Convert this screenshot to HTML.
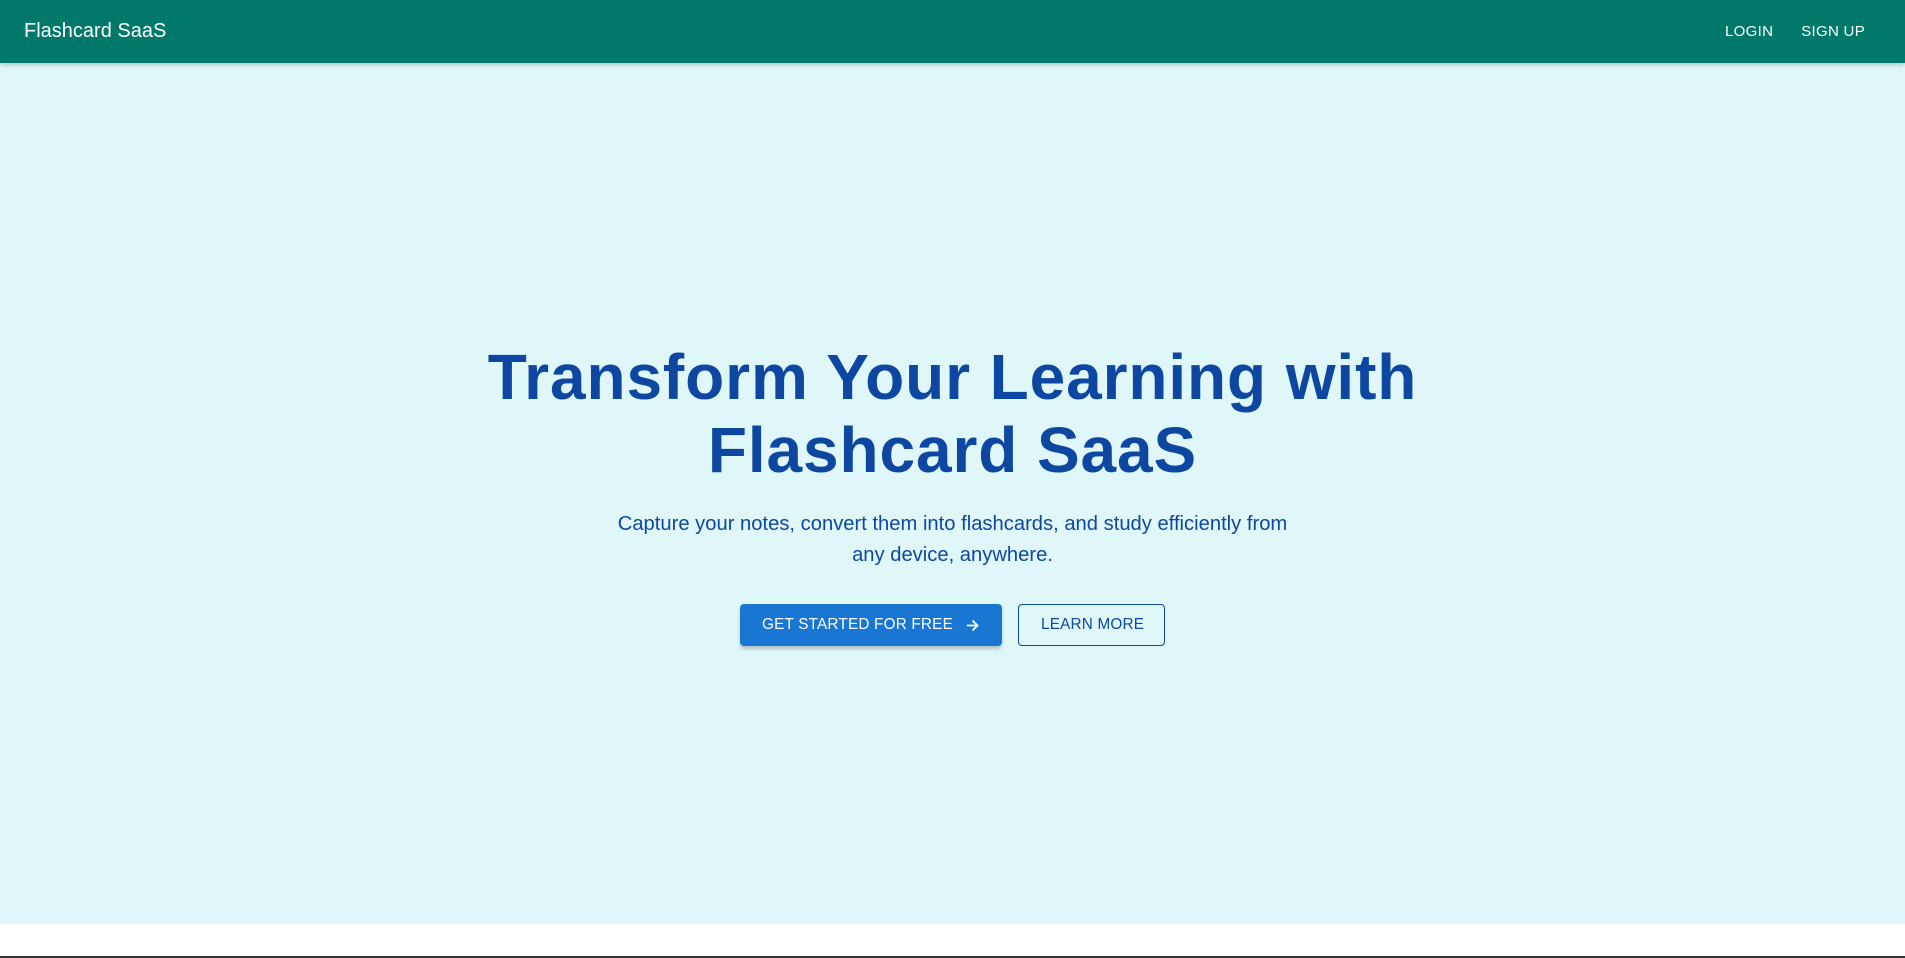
<!DOCTYPE html>
<html><head><meta charset="utf-8"><style>
*{box-sizing:border-box;margin:0;padding:0}
body{width:1905px;height:958px;overflow:hidden;background:#fff;font-family:"Liberation Sans",Arial,sans-serif}
.bar{height:63px;background:#00796b;color:#fff;display:flex;align-items:center;padding:0 24px;box-shadow:0 2px 4px rgba(0,0,0,.2);position:relative;z-index:1}
.bar .t{font-size:20px;flex:1}
.bar .n{font-size:15px;letter-spacing:.3px;margin-left:28px}
.bar .n:last-child{margin-right:16px}
.hero{position:absolute;top:63px;left:0;width:1905px;height:861px;background:#e0f7fa;display:flex;flex-direction:column;align-items:center;justify-content:center;text-align:center;color:#0d47a1;padding-top:4px}
h1{font-size:64px;font-weight:bold;letter-spacing:0.9px;line-height:73px;margin-top:-4px}
p{font-size:20.2px;line-height:31px;width:700px;margin-top:22px;color:#0d47a1}
.btns{display:flex;gap:16px;margin-top:33px}
.b{height:42px;display:flex;align-items:center;white-space:nowrap;font-size:15.3px;border-radius:4px;padding:0 0 0 22px;letter-spacing:.2px}
.p{background:#1976d2;color:#fff;box-shadow:0 3px 3px rgba(0,0,0,.2);width:262px}
.o{border:1.3px solid #0d47a1;color:#0d47a1;width:147px}
.foot{position:absolute;bottom:0;left:0;width:1905px;height:2px;background:#333}
</style></head><body>
<div class="bar"><div class="t">Flashcard SaaS</div><div class="n">LOGIN</div><div class="n">SIGN UP</div></div>
<div class="hero">
<h1>Transform Your Learning with<br>Flashcard SaaS</h1>
<p>Capture your notes, convert them into flashcards, and study efficiently from any device, anywhere.</p>
<div class="btns"><div class="b p">GET STARTED FOR FREE<svg width="17" height="17" viewBox="0 0 24 24" style="margin-left:11px"><path d="M4 12h15M12 5l7 7-7 7" stroke="#fff" stroke-width="2.6" fill="none"/></svg></div><div class="b o">LEARN MORE</div></div>
</div>
<div class="foot"></div>
</body></html>
